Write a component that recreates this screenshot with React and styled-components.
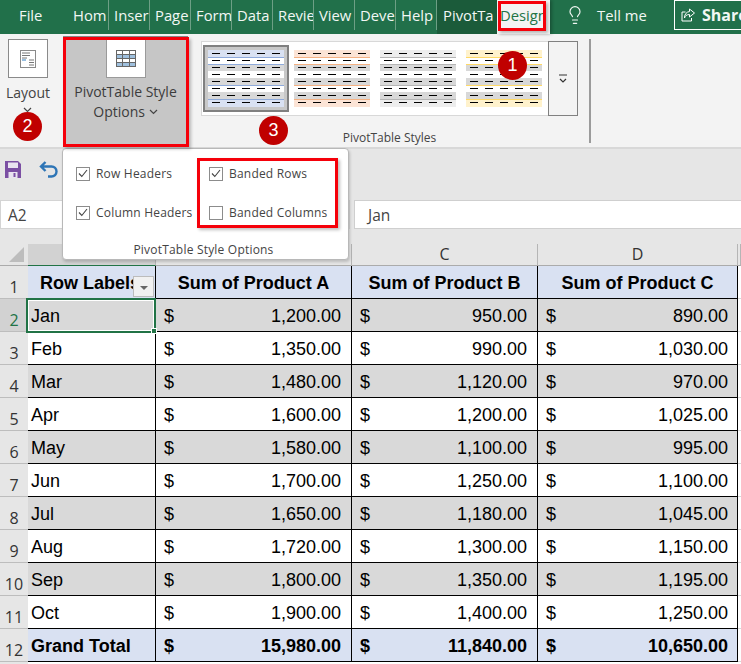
import React from "react";
import styled, { createGlobalStyle } from "styled-components";
import { Lightbulb } from "lucide-react";

const Global = createGlobalStyle`
  html, body { margin: 0; padding: 0; background: #fff; }
  * { box-sizing: border-box; }
`;
const ui = `"Open Sans", "Noto Sans", sans-serif`;
const sheet = `"Liberation Sans", Arial, sans-serif`;

const Page = styled.div`
  position: relative; width: 741px; height: 664px; overflow: hidden;
  background: #fff; font-family: ${ui};
`;
const TitleBar = styled.div`
  display: flex; align-items: stretch; height: 34px; background: #21704a; color: #f2f7f4;
  font-size: 14.8px; line-height: 20px;
`;
const FileTab = styled.div`
  flex: none; width: 68px; padding: 5px 0 0 19px;
`;
const Tab = styled.div`
  flex: none; width: 41px; height: 30px; padding: 5px 0 0 5px;
  overflow: hidden; white-space: nowrap;
  border-right: 1px solid #6d9f85;
`;
const PivotTab = styled(Tab)`
  height: 34px; background: #1b5b3a; border-right: none; padding-left: 6px; width: 60px;
`;
const DesignTab = styled.div`
  flex: none; width: 53px; height: 34px; padding: 5px 0 0 3px; background: #f3f3f3; color: #217346;
  overflow: hidden; white-space: nowrap;
  box-shadow: 2px 0 3px rgba(0,0,0,.25);
`;
const TellArea = styled.div`
  flex: 1; min-width: 0; display: flex; align-items: flex-start; padding: 5px 0 0 15px;
`;
const TellText = styled.span` flex: none; margin-left: 12px; width: 77px; `;
const ShareBtn = styled.div`
  flex: none; display: flex; align-items: center; gap: 5px; width: 67px; height: 30px; padding-left: 5px; margin-top: -5px;
  border: 1px solid #fff; border-right: none; font-weight: 700; font-size: 16px; overflow: hidden; white-space: nowrap;
`;
const Ribbon = styled.div`
  display: flex; height: 115px; padding-top: 2px; background: #f3f3f3; border-bottom: 2px solid #d8d8d8; color: #444;
`;
const LayoutGroup = styled.div`
  width: 63px; display: flex; flex-direction: column; align-items: flex-start; padding: 3px 0 0 8px;
  font-size: 14px; line-height: 20px;
`;
const IconBox = styled.div`
  width: 40px; height: 39px; background: #fff; border: 1px solid #8a8a8a;
  display: flex; align-items: center; justify-content: center;
`;
const LayoutLabel = styled.div` margin: 5px 0 0 -2px; `;
const LayoutChevron = styled.div` margin: 4px 0 0 15px; `;
const Chev = styled.svg` display: block; `;
const InlineChev = styled.svg` display: inline-block; vertical-align: 2px; `;
const PivotButton = styled.div`
  width: 125px; height: 110px; background: #c6c6c6; display: flex; flex-direction: column; align-items: center;
  padding-top: 3px; font-size: 14px; line-height: 20px; color: #3c3c3c; text-align: center;
  box-shadow: inset 0 0 0 1px #8a8a8a;
`;
const PivotIcon = styled(IconBox)` border-top: none; border-color: #9a9a9a; `;
const PivotLabel = styled.div` margin-top: ${p => p.$top || 0}px; white-space: nowrap; `;
const StylesGroup = styled.div`
  width: 403px; padding: 5px 0 0 13px;
  display: flex; flex-direction: column;
  border-right: 2px solid #9b9b9b; height: 104px; margin-top: 3px;
`;
const GalleryRow = styled.div` flex: none; display: flex; height: 75px; margin-top: -3px; `;
const Gallery = styled.div`
  width: 347px; background: #fff; border: 1px solid #d8d8d8; border-right: none;
  display: flex; align-items: center; padding-left: 1px;
`;
const Thumb = styled.div`
  flex: none; width: 86px; height: 67px; display: flex; align-items: center; justify-content: center;
  background: ${p => (p.$active ? "#c8c8c8" : "#fff")};
  border: 2px solid ${p => (p.$active ? "#808080" : "#fff")};
`;
const GalleryMore = styled.div`
  width: 30px; background: #f3f3f3; border: 1px solid #808080;
  display: flex; align-items: center; justify-content: center;
`;
const GroupLabel = styled.div`
  flex: none; font-size: 12px; line-height: 16px; text-align: center; width: 377px; margin-top: 14px; color: #444;
`;
const QatStrip = styled.div`
  height: 51px; background: #e6e6e6; display: flex; align-items: flex-start; padding: 12px 0 0 5px; gap: 18px;
`;
const FormulaRow = styled.div`
  display: flex; gap: 4px; height: 30px; background: #e6e6e6;
`;
const NameBox = styled.div`
  width: 350px; height: 29px; background: #fff; border: 1px solid #d4d4d4; padding: 3px 0 0 7px;
  font-size: 15.500px; color: #444; line-height: 22px;
`;
const FormulaBox = styled.div`
  flex: 1; height: 29px; background: #fff; border: 1px solid #cfcfcf; border-right: none; padding: 3px 0 0 13px;
  font-size: 15.500px; color: #444; line-height: 22px;
`;
const Gap = styled.div` height: 14px; background: #e6e6e6; `;
const Grid = styled.div`
  display: grid; grid-template-columns: 28px 128px 196px 186px 200px 3px;
  grid-template-rows: 22px 33px repeat(11, 33px) 3px;
  font-family: ${sheet}; font-size: 18px; color: #000;
`;
const ColHead = styled.div`
  background: ${p => (p.$sel ? "#d2d2d2" : "#e6e6e6")}; border-right: 1px solid #b5b5b5;
  border-bottom: 1px solid ${p => (p.$sel ? "#217346" : "#ababab")};
  font-family: ${ui}; font-size: 16px; line-height: 20px; text-align: center; color: #333;
`;
const Corner = styled.div`
  background: #e6e6e6; border-bottom: 1px solid #ababab; display: flex; align-items: flex-end; justify-content: flex-end; padding: 0 4px 3px 0;
`;
const CornerTri = styled.div`
  width: 0; height: 0; border-style: solid; border-width: 0 0 15px 15px; border-color: transparent transparent #bdbdbd transparent;
`;
const RowHead = styled.div`
  background: ${p => (p.$sel ? "#d2d2d2" : "#e6e6e6")}; color: ${p => (p.$sel ? "#217346" : "#333")};
  border-bottom: 1px solid #bdbdbd; font-family: ${ui}; font-size: 16px; line-height: 20px;
  display: flex; align-items: flex-end; justify-content: center; padding-bottom: 1px;
`;
const Cell = styled.div`
  position: relative; display: flex; align-items: center; justify-content: space-between;
  padding: 2px ${p => p.$pr || 10}px 0 ${p => (p.$label ? 3 : 8)}px; white-space: nowrap; overflow: hidden;
  background: ${p => p.$bg}; font-weight: ${p => (p.$bold ? 700 : 400)};
  border-right: 1px solid #000; border-bottom: 1px solid #000;
`;
const HeadCell = styled(Cell)`
  justify-content: center; padding: 3px 0 0; background: #d9e1f2; font-weight: 700;
`;
const RowLabelCell = styled(HeadCell)`
  justify-content: flex-start; padding-left: 12px;
`;
const FilterBtn = styled.div`
  position: absolute; right: 1px; bottom: 1px; width: 21px; height: 21px; background: #f1f1f1; border: 1px solid #bcbcbc;
  display: flex; align-items: center; justify-content: center;
`;
const FilterArrow = styled.div`
  width: 0; height: 0; border-style: solid; border-width: 4px 4px 0 4px; border-color: #666 transparent transparent transparent; margin-top: 2px;
`;
const Edge = styled.div` background: #fff; border-bottom: 1px solid #d8d8d8; `;
const Filler = styled.div` background: ${p => p.$bg || "#fff"}; `;
const CurrentCell = styled.div`
  position: absolute; left: 26px; top: 298px; width: 130px; height: 35px;
  border: 2px solid #217346; box-shadow: inset 0 0 0 1px #fff;
`;
const Handle = styled.div`
  position: absolute; right: -3px; bottom: -3px; width: 6px; height: 6px; background: #217346; border: 1px solid #fff;
`;
const Popup = styled.div`
  position: absolute; left: 62px; top: 148px; width: 287px; height: 112px;
  background: #fff; border: 1px solid #b8b8b8; border-radius: 4px; box-shadow: 1px 2px 3px rgba(0,0,0,.18);
  display: grid; grid-template-columns: 133px 1fr; grid-template-rows: 39px 39px 1fr; padding: 5px 0 0 13px;
  font-size: 12px; color: #444; letter-spacing: .2px;
`;
const Opt = styled.div` display: flex; align-items: center; gap: 6px; white-space: nowrap; `;
const Box = styled.div`
  width: 14px; height: 14px; border: 1px solid #8c8c8c; background: #fff; display: flex; align-items: center; justify-content: center;
`;
const PopupLabel = styled.div`
  grid-column: 1 / 3; text-align: center; font-size: 12px; line-height: 16px; padding: 10px 17px 0 0;
`;
const RedBox = styled.div`
  position: absolute; left: ${p => p.$x}px; top: ${p => p.$y}px; width: ${p => p.$w}px; height: ${p => p.$h}px;
  border: 3px solid #f5000a; pointer-events: none;
  box-shadow: 2px 2px 3px rgba(0,0,0,.25);
`;
const Badge = styled.div`
  position: absolute; left: ${p => p.$x}px; top: ${p => p.$y}px; width: 29px; height: 29px; border-radius: 50%;
  background: #c00000; color: #fff; font-family: ${sheet}; font-size: 18px; line-height: 29px; text-align: center;
`;

const Chevron = () => (
  <Chev width="9" height="6" viewBox="0 0 9 6"><path d="M1 1l3.500 3.500L8 1" fill="none" stroke="#444" strokeWidth="1.2" /></Chev>
);

const dashes = [4, 19, 34, 49, 64];
const dashY = [3, 10, 17, 24, 31, 38, 45, 52];
const bands = [[14, "#d8d8d8"], [28, "#d8d8d8"], [42, "#d8d8d8"]];
const StyleThumb = ({ head, line }) => (
  <svg width="76" height="57" viewBox="0 0 76 57" shapeRendering="crispEdges" style={{ display: "block" }}>
    <rect width="76" height="57" fill="#fff" />
    <rect width="76" height="7" fill={head} />
    <rect y="49" width="76" height="8" fill={head} />
    {bands.map(([y, c]) => <rect key={y} y={y} width="76" height="7" fill={c} />)}
    {[7, 14, 35, 49].map(y => <rect key={y} y={y} width="76" height="1" fill={line} />)}
    {dashY.map(y => dashes.map(x => <rect key={x + "-" + y} x={x} y={y} width="8" height="1" fill="#000" />))}
  </svg>
);

const months = [
  ["Jan", "1,200.00", "950.00", "890.00"], ["Feb", "1,350.00", "990.00", "1,030.00"],
  ["Mar", "1,480.00", "1,120.00", "970.00"], ["Apr", "1,600.00", "1,200.00", "1,025.00"],
  ["May", "1,580.00", "1,100.00", "995.00"], ["Jun", "1,700.00", "1,250.00", "1,100.00"],
  ["Jul", "1,650.00", "1,180.00", "1,045.00"], ["Aug", "1,720.00", "1,300.00", "1,150.00"],
  ["Sep", "1,800.00", "1,350.00", "1,195.00"], ["Oct", "1,900.00", "1,400.00", "1,250.00"],
];

const Check = ({ on }) => (
  <Box>{on && <svg width="10" height="9" viewBox="0 0 10 9"><path d="M1 4.500L3.800 7.500 9 1" fill="none" stroke="#444" strokeWidth="1.1" /></svg>}</Box>
);

export default function App() {
  return (
    <Page>
      <Global />
      <TitleBar>
        <FileTab>File</FileTab>
        {["Hom", "Inser", "Page", "Form", "Data", "Revie", "View", "Deve", "Help"].map(t => <Tab key={t}>{t}</Tab>)}
        <PivotTab>PivotTa</PivotTab>
        <DesignTab>Design</DesignTab>
        <TellArea>
          <Lightbulb size={20} strokeWidth={1.4} color="#f2f7f4" />
          <TellText>Tell me</TellText>
          <ShareBtn>
            <svg width="17" height="16" viewBox="0 0 16 16" style={{ flex: "none" }}><path d="M9 2l5 4-5 4V7.500C6 7.500 4.500 9 4 11c0-4 2-6 5-6.500zM11 11v3H1.500V5H5" fill="none" stroke="#fff" strokeWidth="1" /></svg>
            Share
          </ShareBtn>
        </TellArea>
      </TitleBar>
      <Ribbon>
        <LayoutGroup>
          <IconBox>
            <svg width="16" height="18" viewBox="0 0 16 18"><rect x=".5" y=".5" width="15" height="17" fill="#fff" stroke="#8a8a8a" /><path d="M2 3h8M2 5.500h8M2 8h5M9 10h5M9 12.500h5M9 15h5" stroke="#777" /><path d="M2 10h4" stroke="#2f7fc1" /></svg>
          </IconBox>
          <LayoutLabel>Layout</LayoutLabel>
          <LayoutChevron><Chevron /></LayoutChevron>
        </LayoutGroup>
        <PivotButton>
          <PivotIcon>
            <svg width="20" height="17" viewBox="0 0 20 17"><rect x=".5" y=".5" width="19" height="16" fill="#fff" stroke="#666" /><rect x="1" y="4" width="18" height="4" fill="#9fc0de" /><rect x="1" y="12" width="18" height="4" fill="#9fc0de" /><path d="M0 4.500h20M0 8.500h20M0 12.500h20M6.500 0v17M13.500 0v17" stroke="#666" /></svg>
          </PivotIcon>
          <PivotLabel $top={4}>PivotTable Style</PivotLabel>
          <PivotLabel>Options <InlineChev width="9" height="6" viewBox="0 0 9 6"><path d="M1 1l3.500 3.500L8 1" fill="none" stroke="#444" strokeWidth="1.2" /></InlineChev></PivotLabel>
        </PivotButton>
        <StylesGroup>
          <GalleryRow>
            <Gallery>
              <Thumb $active><StyleThumb head="#d9e1f2" line="#8eaadb" /></Thumb>
              <Thumb><StyleThumb head="#fce4d6" line="#f4b183" /></Thumb>
              <Thumb><StyleThumb head="#ededed" line="#b5b5b5" /></Thumb>
              <Thumb><StyleThumb head="#fff2cc" line="#ffd966" /></Thumb>
            </Gallery>
            <GalleryMore>
              <svg width="10" height="10" viewBox="0 0 10 10"><path d="M1 1h8" stroke="#333" /><path d="M2 5l3 3 3-3" fill="none" stroke="#333" strokeWidth="1.200" /></svg>
            </GalleryMore>
          </GalleryRow>
          <GroupLabel>PivotTable Styles</GroupLabel>
        </StylesGroup>
      </Ribbon>
      <QatStrip>
        <svg width="16" height="17" viewBox="0 0 16 17"><path d="M0 0h13l3 3v14H0z" fill="#7b4fa3" /><rect x="3" y="1.500" width="10" height="5.500" fill="#e9e3f0" /><rect x="3.500" y="11" width="9" height="6" fill="#e9e3f0" /><rect x="8.500" y="12" width="2" height="4" fill="#7b4fa3" /></svg>
        <svg width="20" height="18" viewBox="0 0 20 18"><path d="M6.500 1L2 5.500 6.500 10M2 5.500h10.500a5 5 0 0 1 0 10H9" fill="none" stroke="#2e75b6" strokeWidth="2.400" /></svg>
      </QatStrip>
      <FormulaRow>
        <NameBox>A2</NameBox>
        <FormulaBox>Jan</FormulaBox>
      </FormulaRow>
      <Gap />
      <Grid>
        <Corner><CornerTri /></Corner>
        <ColHead $sel />
        <ColHead />
        <ColHead>C</ColHead>
        <ColHead>D</ColHead>
        <ColHead />

        <RowHead>1</RowHead>
        <RowLabelCell>Row Labels<FilterBtn><FilterArrow /></FilterBtn></RowLabelCell>
        <HeadCell>Sum of Product A</HeadCell>
        <HeadCell>Sum of Product B</HeadCell>
        <HeadCell>Sum of Product C</HeadCell>
        <Edge />

        {months.map((m, i) => {
          const bg = i % 2 === 0 ? "#d9d9d9" : "#fff";
          return (
            <React.Fragment key={m[0]}>
              <RowHead $sel={i === 0}>{i + 2}</RowHead>
              <Cell $bg={bg} $label>{m[0]}</Cell>
              {m.slice(1).map((v, j) => <Cell key={j} $bg={bg} $pr={j === 2 ? 9 : 10}><span>$</span><span>{v}</span></Cell>)}
              <Edge />
            </React.Fragment>
          );
        })}

        <RowHead>12</RowHead>
        <Cell $bg="#d9e1f2" $label $bold>Grand Total</Cell>
        <Cell $bg="#d9e1f2" $bold><span>$</span><span>15,980.00</span></Cell>
        <Cell $bg="#d9e1f2" $bold><span>$</span><span>11,840.00</span></Cell>
        <Cell $bg="#d9e1f2" $bold $pr={9}><span>$</span><span>10,650.00</span></Cell>
        <Edge />

        <Filler $bg="#e6e6e6" /><Filler /><Filler /><Filler /><Filler /><Filler />
      </Grid>

      <CurrentCell><Handle /></CurrentCell>

      <Popup>
        <Opt><Check on />Row Headers</Opt>
        <Opt><Check on />Banded Rows</Opt>
        <Opt><Check on />Column Headers</Opt>
        <Opt><Check />Banded Columns</Opt>
        <PopupLabel>PivotTable Style Options</PopupLabel>
      </Popup>

      <RedBox $x={63} $y={37} $w={126} $h={110} />
      <RedBox $x={498} $y={1} $w={48} $h={30} />
      <RedBox $x={197} $y={158} $w={141} $h={70} />
      <Badge $x={13} $y={112}>2</Badge>
      <Badge $x={259} $y={116}>3</Badge>
      <Badge $x={498} $y={51}>1</Badge>
    </Page>
  );
}
